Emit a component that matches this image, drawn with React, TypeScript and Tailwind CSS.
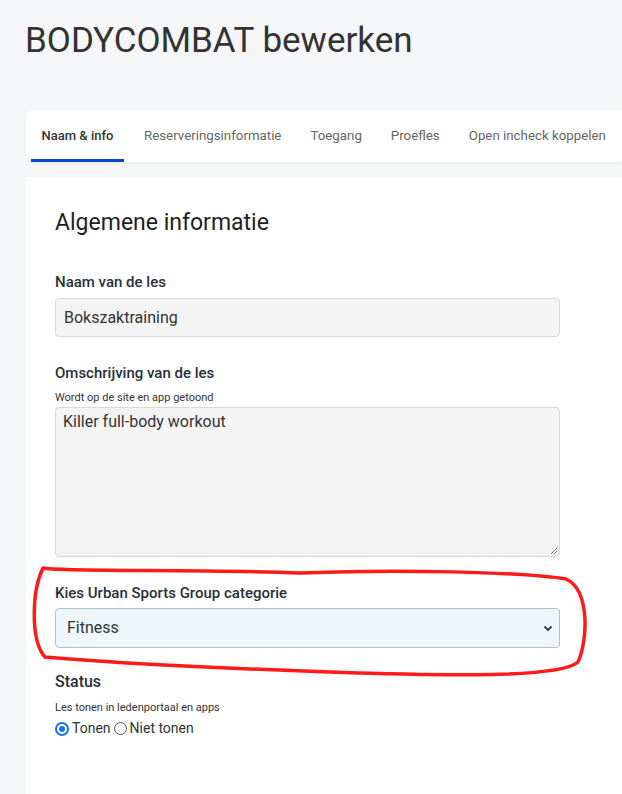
import React from "react";

export default function App() {
  return (
    <div className="relative min-h-[794px] w-[622px] overflow-hidden bg-[#f5f6f8] text-[#2b2b2b]" style={{ fontFamily: "Roboto, 'Noto Sans', sans-serif" }}>
      <h1 className="pl-[25px] pt-[20px] text-[35px] leading-[42px] text-[#333]">BODYCOMBAT bewerken</h1>

      <div className="ml-[26px] mt-[48px] flex h-[52px] items-stretch rounded-l-[6px] bg-white pl-[5px] shadow-[0_1px_3px_rgba(0,0,0,0.06)]">
        <div className="flex w-[93px] items-center justify-center border-b-[3px] border-[#0047cc] pt-[3px] text-[13px] font-medium text-[#333]">Naam &amp; info</div>
        <div className="flex items-center pl-[20px] text-[13.3px] text-[#666]">Reserveringsinformatie</div>
        <div className="flex items-center pl-[29px] text-[13.3px] text-[#666]">Toegang</div>
        <div className="flex items-center pl-[29px] text-[13.3px] text-[#666]">Proefles</div>
        <div className="flex items-center whitespace-nowrap pl-[29px] text-[13.3px] text-[#666]">Open incheck koppelen</div>
      </div>

      <div className="ml-[26px] mt-[15px] min-h-[640px] bg-white pl-[29px] pt-[30px]">
        <h2 className="text-[23px] leading-[32px] text-[#1f1f1f]">Algemene informatie</h2>

        <div className="mt-[33px] text-[15px] font-medium leading-[20px] text-[#27313b]">Naam van de les</div>
        <div className="mt-[6px] flex h-[39px] w-[505px] items-center rounded-[4px] border border-[#d9d9d9] bg-[#f4f4f4] px-[8px] text-[16px] text-[#333]">Bokszaktraining</div>

        <div className="mt-[26px] text-[15px] font-medium leading-[20px] text-[#27313b]">Omschrijving van de les</div>
        <div className="mt-[8px] text-[11px] leading-[14px] text-[#333]">Wordt op de site en app getoond</div>
        <div className="relative mt-[2px] h-[150px] w-[505px] rounded-[4px] border border-[#d9d9d9] bg-[#f4f4f4] px-[7px] pt-[2px] text-[16px] text-[#333]">
          Killer full-body workout
          <svg className="absolute bottom-[1px] right-[1px]" width="10" height="10" viewBox="0 0 10 10">
            <path d="M9 3 L3 9 M9 6 L6 9" stroke="#777" strokeWidth="1" fill="none" />
          </svg>
        </div>

        <div className="mt-[26px] text-[15px] font-medium leading-[20px] text-[#27313b]">Kies Urban Sports Group categorie</div>
        <div className="mt-[5px] flex h-[40px] w-[505px] items-center justify-between rounded-[4px] border border-[#a7c4d6] bg-[#f0f7fb] pl-[11px] pr-[6px] text-[16px] text-[#333]">
          <span>Fitness</span>
          <svg width="10" height="7" viewBox="0 0 10 7">
            <path d="M1.5 1.5 L5 5 L8.5 1.5" stroke="#333" strokeWidth="1.8" fill="none" />
          </svg>
        </div>

        <div className="mt-[24px] text-[16px] font-medium leading-[20px] text-[#27313b]">Status</div>
        <div className="mt-[9px] text-[11px] leading-[14px] text-[#333]">Les tonen in ledenportaal en apps</div>
        <div className="mt-[3px] flex items-center text-[14px] text-[#333]">
          <span className="mr-[3px] inline-flex h-[14px] w-[14px] items-center justify-center rounded-full border-2 border-[#1a73e8] bg-white">
            <span className="h-[6px] w-[6px] rounded-full bg-[#1a73e8]" />
          </span>
          <span>Tonen</span>
          <span className="ml-[3px] mr-[3px] inline-block h-[13px] w-[13px] rounded-full border border-[#555] bg-white" />
          <span>Niet tonen</span>
        </div>
      </div>

      <svg className="pointer-events-none absolute left-0 top-0" width="622" height="794" viewBox="0 0 622 794">
        <path
          d="M43 568 C 60 572, 200 569, 300 573 C 400 569, 520 572, 566 579 C 590 590, 588 640, 578 662 C 560 678, 450 676, 330 672 C 220 668, 100 662, 45 657 C 30 640, 32 590, 43 568 Z"
          stroke="#ff1a1a"
          strokeWidth="3.5"
          fill="none"
          strokeLinejoin="round"
        />
      </svg>
    </div>
  );
}
